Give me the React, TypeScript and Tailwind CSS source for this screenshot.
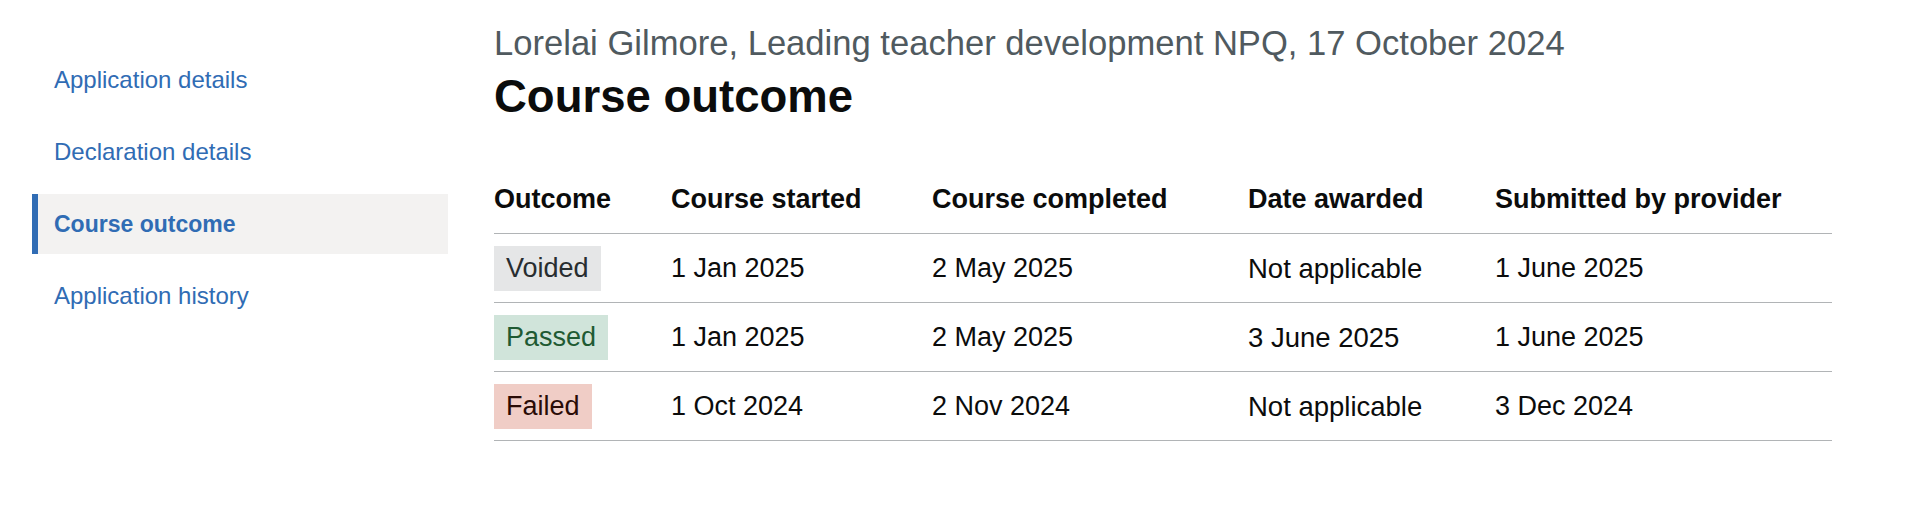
const navItems = [
  { label: 'Application details', active: false },
  { label: 'Declaration details', active: false },
  { label: 'Course outcome', active: true },
  { label: 'Application history', active: false },
];

type Outcome = 'Voided' | 'Passed' | 'Failed';

const rows: Array<{
  outcome: Outcome;
  started: string;
  completed: string;
  awarded: string;
  submitted: string;
}> = [
  { outcome: 'Voided', started: '1 Jan 2025', completed: '2 May 2025', awarded: 'Not applicable', submitted: '1 June 2025' },
  { outcome: 'Passed', started: '1 Jan 2025', completed: '2 May 2025', awarded: '3 June 2025', submitted: '1 June 2025' },
  { outcome: 'Failed', started: '1 Oct 2024', completed: '2 Nov 2024', awarded: 'Not applicable', submitted: '3 Dec 2024' },
];

const tagClasses: Record<Outcome, string> = {
  Voided: 'bg-[#e5e6e7] text-[#282d30]',
  Passed: 'bg-[#d0e4da] text-[#1f5a33]',
  Failed: 'bg-[#f0cdc6] text-[#2a0b06]',
};

function Tag({ outcome }: { outcome: Outcome }) {
  return (
    <strong
      className={`inline-block align-top px-[12px] pt-[5px] pb-[6px] text-[27px] leading-[34px] font-normal ${tagClasses[outcome]}`}
    >
      {outcome}
    </strong>
  );
}

export default function App() {
  return (
    <div className="min-h-[520px] bg-white font-['Liberation_Sans',Arial,sans-serif] text-[#0b0c0c]">
      <div className="flex pl-[32px]">
        <aside className="w-[416px] shrink-0 pt-[50px]">
          <nav className="flex flex-col gap-[12px]">
            {navItems.map(({ label, active }) => (
              <a
                key={label}
                href="#"
                className={
                  active
                    ? 'block border-l-[6px] border-[#306cb4] bg-[#f3f2f1] py-[14px] pl-[16px] text-[23px] leading-[32px] font-bold text-[#306cb4] no-underline'
                    : 'block border-l-[6px] border-transparent py-[14px] pl-[16px] text-[24px] leading-[32px] text-[#306cb4] no-underline'
                }
              >
                {label}
              </a>
            ))}
          </nav>
        </aside>

        <main className="ml-[46px] pt-[23px]">
          <span className="block text-[34.6px] leading-[40px] text-[#505a5f]">
            Lorelai Gilmore, Leading teacher development NPQ, 17 October 2024
          </span>
          <h1 className="mt-[9px] text-[45.5px] leading-[50px] font-bold">Course outcome</h1>

          <table className="mt-[48px] w-[1338px] table-fixed border-collapse text-left">
            <thead>
              <tr className="border-b border-[#b1b4b6]">
                <th className="w-[177px] pt-[12px] pb-[17px] text-[27px] leading-[34px] font-bold">Outcome</th>
                <th className="w-[261px] pt-[12px] pb-[17px] text-[27px] leading-[34px] font-bold">Course started</th>
                <th className="w-[316px] pt-[12px] pb-[17px] text-[27px] leading-[34px] font-bold">Course completed</th>
                <th className="w-[247px] pt-[12px] pb-[17px] text-[27px] leading-[34px] font-bold">Date awarded</th>
                <th className="w-[337px] pt-[12px] pb-[17px] text-[27px] leading-[34px] font-bold">Submitted by provider</th>
              </tr>
            </thead>
            <tbody>
              {rows.map((row, i) => (
                <tr key={i} className="border-b border-[#b1b4b6]">
                  <td className="pt-[12px] pb-[11px] align-top leading-[45px]">
                    <Tag outcome={row.outcome} />
                  </td>
                  <td className="pt-[12px] pb-[11px] align-top text-[27px] leading-[45px]">{row.started}</td>
                  <td className="pt-[12px] pb-[11px] align-top text-[27px] leading-[45px]">{row.completed}</td>
                  <td className="pt-[12px] pb-[11px] align-top text-[27.5px] leading-[45px]">{row.awarded}</td>
                  <td className="pt-[12px] pb-[11px] align-top text-[27px] leading-[45px]">{row.submitted}</td>
                </tr>
              ))}
            </tbody>
          </table>
        </main>
      </div>
    </div>
  );
}
